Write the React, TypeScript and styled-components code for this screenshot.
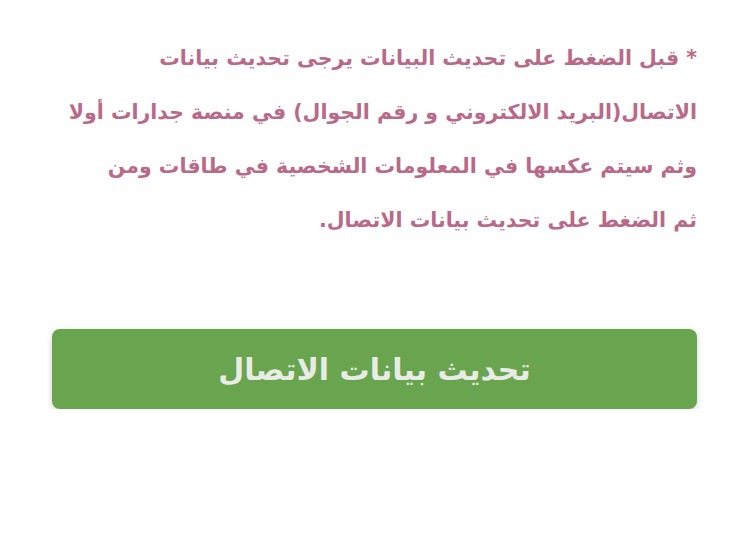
import React from "react";
import styled, { createGlobalStyle } from "styled-components";

const Global = createGlobalStyle`
  html, body { margin: 0; padding: 0; background: #ffffff; }
  body { font-family: "DejaVu Sans", "Noto Sans", sans-serif; }
`;

const Page = styled.div`
  direction: rtl;
  width: 750px;
  box-sizing: border-box;
  padding: 31px 53px 0 52px;
  display: flex;
  flex-direction: column;
`;

const Note = styled.p`
  margin: 0;
  color: #b96a89;
  font-family: "DejaVu Sans", sans-serif;
  font-weight: 700;
  font-size: 20.5px;
  line-height: 54px;
  text-align: right;
  white-space: nowrap;
`;

const Button = styled.button`
  margin-top: 82px;
  height: 80px;
  width: 100%;
  border: none;
  border-radius: 8px;
  background: #69a54f;
  color: #e9ebe6;
  font-family: "DejaVu Sans", sans-serif;
  font-weight: 700;
  font-size: 30px;
  box-shadow: 0 2px 6px rgba(0, 0, 0, 0.18);
  direction: rtl;
  cursor: pointer;
`;

export default function App() {
  return (
    <>
      <Global />
      <Page>
        <Note>
          * قبل الضغط على تحديث البيانات يرجى تحديث بيانات
          <br />
          الاتصال(البريد الالكتروني و رقم الجوال) في منصة جدارات أولا
          <br />
          وثم سيتم عكسها في المعلومات الشخصية في طاقات ومن
          <br />
          ثم الضغط على تحديث بيانات الاتصال.
        </Note>
        <Button>تحديث بيانات الاتصال</Button>
      </Page>
    </>
  );
}
